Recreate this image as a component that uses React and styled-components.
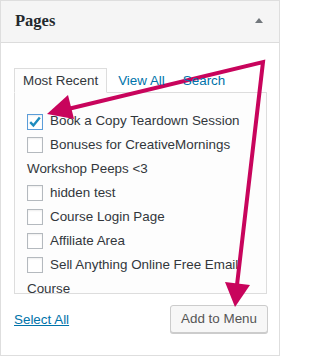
import React from "react";
import styled, { createGlobalStyle } from "styled-components";

const GlobalStyle = createGlobalStyle`
  html, body {
    margin: 0;
    padding: 0;
    background: #fff;
  }
  body {
    font-family: "Liberation Sans", Arial, sans-serif;
    font-size: 13.4px;
    color: #32373c;
  }
`;

const Page = styled.div`
  position: relative;
  width: 282px;
  height: 358px;
  overflow: hidden;
`;

const Panel = styled.section`
  width: 280px;
  height: 356px;
  box-sizing: border-box;
  border: 1px solid #dedede;
  background: #fff;
`;

const Header = styled.header`
  height: 42px;
  box-sizing: border-box;
  display: flex;
  align-items: center;
  justify-content: space-between;
  padding: 0 14px 2px 14px;
  background: #f5f5f5;
  border-bottom: 1px solid #dcdcdc;
`;

const Title = styled.h3`
  margin: 0;
  font-family: "Liberation Serif", "Times New Roman", serif;
  font-weight: bold;
  font-size: 16.5px;
  color: #23282d;
`;

const Caret = styled.span`
  width: 0;
  height: 0;
  margin-right: 2px;
  border-left: 4px solid transparent;
  border-right: 4px solid transparent;
  border-bottom: 5px solid #72777c;
`;

const Body = styled.div`
  padding: 25px 12px 0 13px;
`;

const Tabs = styled.ul`
  display: flex;
  margin: 0;
  padding: 0;
  list-style: none;
  height: 24px;
`;

const Tab = styled.li`
  box-sizing: border-box;
  height: 25px;
  line-height: 23px;
  padding: 0 8px;
  margin-right: ${(p) => p.$gap || 0}px;
  border: 1px solid ${(p) => (p.$active ? "#ddd" : "transparent")};
  border-bottom-color: ${(p) => (p.$active ? "#fdfdfd" : "transparent")};
  background: ${(p) => (p.$active ? "#fdfdfd" : "transparent")};
  color: ${(p) => (p.$active ? "#32373c" : "#0073aa")};
  position: relative;
  z-index: 1;
`;

const TabsPanel = styled.div`
  box-sizing: border-box;
  height: 202px;
  overflow: hidden;
  border: 1px solid #ddd;
  background: #fdfdfd;
  padding: 16px 11px 0 12px;
`;

const List = styled.ul`
  margin: 0;
  padding: 0;
  list-style: none;
`;

const Item = styled.li`
  line-height: 24px;
  color: #32373c;
`;

const Box = styled.span`
  display: inline-flex;
  align-items: center;
  justify-content: center;
  box-sizing: border-box;
  width: 16px;
  height: 16px;
  margin: 0 7px 0 0;
  vertical-align: -4px;
  border: 1px solid ${(p) => (p.$checked ? "#5b9dd9" : "#b4b9be")};
  background: #fff;
  box-shadow: inset 0 1px 2px rgba(0, 0, 0, 0.07);
`;

const Footer = styled.div`
  display: flex;
  align-items: center;
  justify-content: space-between;
  padding-top: 11px;
`;

const SelectAll = styled.a`
  color: #0073aa;
  text-decoration: underline;
`;

const Button = styled.button`
  height: 28px;
  padding: 0 10px 1px;
  margin-right: -1px;
  font-family: "Liberation Sans", Arial, sans-serif;
  font-size: 13.4px;
  color: #555;
  background: #f7f7f7;
  border: 1px solid #ccc;
  border-radius: 3px;
  box-shadow: 0 1px 0 #ccc;
`;

const Overlay = styled.svg`
  position: absolute;
  left: 0;
  top: 0;
  pointer-events: none;
`;

const pages = [
  { title: "Book a Copy Teardown Session", checked: true },
  { title: "Bonuses for CreativeMornings Workshop Peeps <3" },
  { title: "hidden test" },
  { title: "Course Login Page" },
  { title: "Affiliate Area" },
  { title: "Sell Anything Online Free Email Course" },
];

const Checkbox = ({ checked }) => (
  <Box $checked={checked}>
    {checked && (
      <svg width="14" height="14" viewBox="0 0 14 14">
        <path
          d="M2.2 7.2 L5.4 10.4 L11.8 2.6"
          fill="none"
          stroke="#1e8cbe"
          strokeWidth="2.4"
        />
      </svg>
    )}
  </Box>
);

const Arrows = () => (
  <Overlay width="282" height="358" viewBox="0 0 282 358">
    <polyline
      points="68,109 263,62 237,285"
      fill="none"
      stroke="#c8045c"
      strokeWidth="4"
      strokeLinejoin="miter"
    />
    <polygon points="47,114 68,95 74,119" fill="#c8045c" />
    <polygon points="235,307 225,282 250,285" fill="#c8045c" />
  </Overlay>
);

const App = () => {
  return (
    <Page>
      <GlobalStyle />
      <Panel>
        <Header>
          <Title>Pages</Title>
          <Caret />
        </Header>
        <Body>
          <Tabs>
            <Tab $active $gap={2}>Most Recent</Tab>
            <Tab $gap={0}>View All</Tab>
            <Tab>Search</Tab>
          </Tabs>
          <TabsPanel>
            <List>
              {pages.map((p) => (
                <Item key={p.title}>
                  <Checkbox checked={p.checked} />
                  {p.title}
                </Item>
              ))}
            </List>
          </TabsPanel>
          <Footer>
            <SelectAll href="#">Select All</SelectAll>
            <Button>Add to Menu</Button>
          </Footer>
        </Body>
      </Panel>
      <Arrows />
    </Page>
  );
};

export default App;
